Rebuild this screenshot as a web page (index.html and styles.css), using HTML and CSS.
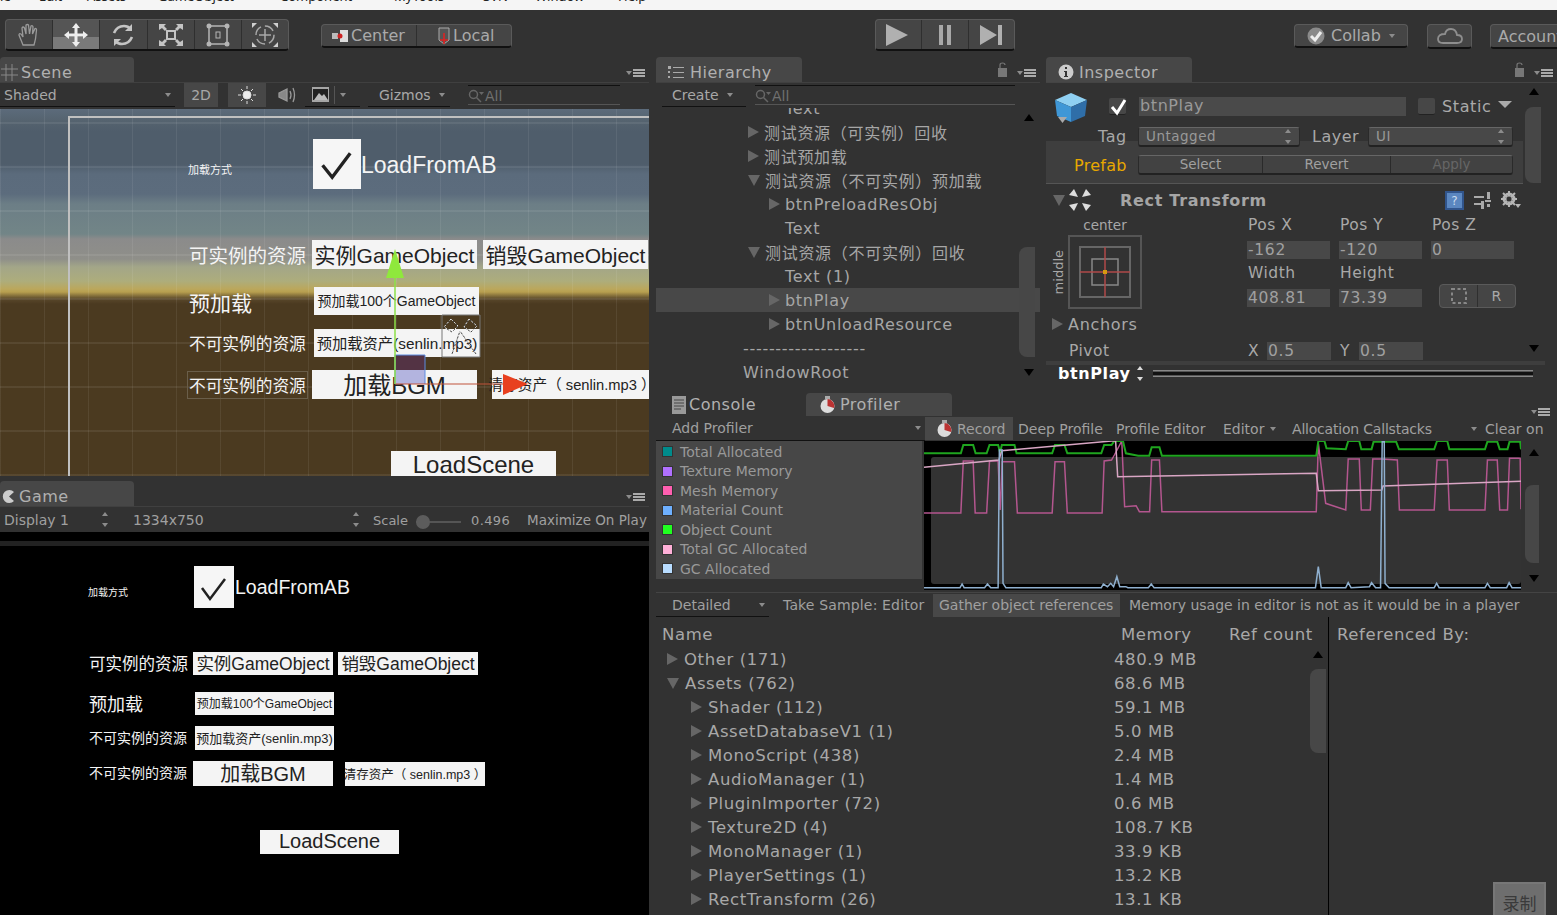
FILE: index.html
```html
<!DOCTYPE html>
<html>

<head>
	<meta charset="utf-8">
	<title>Unity</title>
	<link rel="stylesheet" href="styles.css">
</head>

<body>
	<div class="menubar">
		<div class="menu-row">
			<span class="m-file">File</span><span class="m-edit">Edit</span><span class="m-assets">Assets</span><span class="m-go">GameObject</span><span class="m-comp">Component</span><span class="m-tools">MyTools</span><span class="m-svn">SVN</span><span class="m-win">Window</span><span class="m-help">Help</span>
		</div>
	</div>

	<div class="toolbar">
		<div class="btn-group tools">
			<div class="tbtn"><svg width="26" height="26" viewBox="0 0 26 26" fill="none" stroke="#9a9a9a" stroke-width="1.3"><path d="M7 23 L3 13 Q3 11 5 12 L7 15 L6 6 Q7 4 8.500 6 L10 12 L10 3 Q11.500 2 12.500 3 L13.500 12 L15 4 Q16.500 3 17 5 L16.500 12 L19 6.500 Q20.500 6 20.500 8 L19.500 17 L18 23 Z"/></svg></div>
			<div class="tbtn on"><svg width="26" height="26" viewBox="0 0 26 26" fill="#eee"><path d="M13 1 L17 6 L14.500 6 L14.500 11.500 L20 11.500 L20 9 L25 13 L20 17 L20 14.500 L14.500 14.500 L14.500 20 L17 20 L13 25 L9 20 L11.500 20 L11.500 14.500 L6 14.500 L6 17 L1 13 L6 9 L6 11.500 L11.500 11.500 L11.500 6 L9 6 Z"/></svg></div>
			<div class="tbtn"><svg width="26" height="26" viewBox="0 0 26 26" fill="none" stroke="#c4c4c4" stroke-width="2.600"><path d="M4 11 Q7 4 14 4 Q18 4 21 7"/><path d="M22 15 Q19 22 12 22 Q8 22 5 19"/><path d="M22 2 L22 9 L15 9" fill="#c4c4c4" stroke="none"/><path d="M4 24 L4 17 L11 17" fill="#c4c4c4" stroke="none"/></svg></div>
			<div class="tbtn"><svg width="28" height="26" viewBox="0 0 28 26" fill="#c4c4c4"><rect x="10" y="9" width="8" height="8" fill="none" stroke="#c4c4c4" stroke-width="2"/><path d="M2 2 L9 2 L7 4 L10 7 L8 9 L5 6 L2 8 Z"/><path d="M26 2 L19 2 L21 4 L18 7 L20 9 L23 6 L26 8 Z"/><path d="M2 24 L9 24 L7 22 L10 19 L8 17 L5 20 L2 18 Z"/><path d="M26 24 L19 24 L21 22 L18 19 L20 17 L23 20 L26 18 Z"/></svg></div>
			<div class="tbtn"><svg width="26" height="26" viewBox="0 0 26 26" fill="#b5b5b5"><rect x="4" y="4" width="18" height="18" fill="none" stroke="#b5b5b5" stroke-width="1.500"/><circle cx="4" cy="4" r="2.500"/><circle cx="22" cy="4" r="2.500"/><circle cx="4" cy="22" r="2.500"/><circle cx="22" cy="22" r="2.500"/><rect x="11" y="10" width="4" height="6" fill="none" stroke="#b5b5b5"/></svg></div>
			<div class="tbtn"><svg width="28" height="26" viewBox="0 0 28 26" fill="none" stroke="#a8a8a8" stroke-width="1.500"><circle cx="14" cy="13" r="9" stroke-dasharray="10 4"/><path d="M14 7 V19 M8 13 H20"/><path d="M1 6 V1 H6 Z M27 6 V1 H22 Z M1 20 V25 H6 Z M27 20 V25 H22 Z" fill="#cfcfcf" stroke="none"/></svg></div>
		</div>

		<div class="btn-group pivots">
			<div class="pbtn center"><svg width="18" height="14" viewBox="0 0 18 14"><rect x="0" y="4" width="6" height="6" fill="#bbb"/><rect x="8" y="1" width="8" height="12" fill="#ddd"/><circle cx="8" cy="7" r="2.500" fill="#c22"/></svg>Center</div>
			<div class="pbtn local"><svg width="16" height="20" viewBox="0 0 16 20"><path d="M3 2 H13 V14 L8 18 L3 14 Z" fill="#555" stroke="#aaa"/><path d="M8 7 V18 M4 14 H12" stroke="#d22" stroke-width="1.600"/></svg>Local</div>
		</div>

		<div class="btn-group player">
			<div class="plbtn wide"><svg width="24" height="22" viewBox="0 0 24 22"><path d="M1 0 L23 11 L1 22 Z" fill="#b0b0b0"/></svg></div>
			<div class="plbtn"><svg width="18" height="22" viewBox="0 0 18 22"><path d="M3 1 H7 V21 H3 Z M11 1 H15 V21 H11 Z" fill="#a8a8a8"/></svg></div>
			<div class="plbtn"><svg width="24" height="22" viewBox="0 0 24 22"><path d="M1 1 L18 11 L1 21 Z M19 1 H23 V21 H19 Z" fill="#b0b0b0"/></svg></div>
		</div>

		<div class="btn-group collab"><svg width="18" height="18" viewBox="0 0 18 18"><circle cx="9" cy="9" r="8.500" fill="#8a8a8a"/><path d="M4 9 L8 13 L14 5" fill="none" stroke="#eee" stroke-width="3"/></svg>Collab<i class="drop"></i></div>
		<div class="btn-group cloud"><svg width="28" height="18" viewBox="0 0 28 18" fill="none" stroke="#8e8e8e" stroke-width="1.800"><path d="M7 16 H21 Q26 16 26 12 Q26 8 21 8 Q20 2 15 2 Q10 2 9 7 Q2 7 2 12 Q2 16 7 16 Z"/></svg></div>
		<div class="btn-group account">Account</div>
	</div>

	<div class="workspace">
		<div class="col-left">
			<section class="panel scene-panel">
				<div class="tabs">
					<div class="tab short"><svg width="17" height="17" viewBox="0 0 17 17" stroke="#888" fill="none"><path d="M5 0 V17 M11 0 V17 M0 5 H17 M0 11 H17"/></svg>Scene</div>
					<div class="panel-menu"><i class="drop"></i><b></b></div>
				</div>
				<div class="bar scene-bar">
					<div class="b-shaded">Shaded<i class="drop"></i></div>
					<div class="b-2d">2D</div>
					<div class="b-light"><svg width="20" height="20" viewBox="0 0 20 20" stroke="#ddd"><circle cx="10" cy="10" r="4" fill="#eee"/><path d="M10 1 V4 M10 16 V19 M1 10 H4 M16 10 H19 M4 4 L6 6 M14 14 L16 16 M4 16 L6 14 M14 6 L16 4"/></svg></div>
					<div class="b-audio"><svg width="20" height="18" viewBox="0 0 20 18" fill="none" stroke="#999" stroke-width="1.300"><path d="M1 7 L9 3 V15 L1 11 Z" fill="#888"/><path d="M12 5 Q14 9 12 13 M15 2 Q18 9 15 16"/></svg></div>
					<div class="b-img"><svg width="17" height="15" viewBox="0 0 17 15"><rect width="17" height="15" fill="#a5a5a5"/><rect x="1" y="2" width="15" height="11" fill="#222"/><path d="M2 13 L7 6 L10 9 L12 7 L16 13 Z" fill="#bbb"/></svg><u></u><i class="drop"></i></div>
					<div class="b-giz">Gizmos<i class="drop"></i></div>
					<div class="b-search"><svg width="16" height="14" viewBox="0 0 16 14" fill="none" stroke="#666" stroke-width="1.500"><circle cx="5.500" cy="5.500" r="4"/><path d="M8.500 8.500 L13 13"/><path d="M11 3 H16 L13.500 6 Z" fill="#666" stroke="none"/></svg>All</div>
				</div>
				<div class="scene-view">
					<div class="frame"></div>
					<div class="lbl s-way">加载方式</div>
					<div class="box s-box"><svg viewBox="0 0 40 40"><path d="M8 21 L16 31 L31 11" fill="none" stroke="#222" stroke-width="2.800"/></svg></div>
					<div class="lbl s-ab">LoadFromAB</div>
					<div class="lbl s-res1">可实例的资源</div>
					<div class="ubtn s-inst">实例GameObject</div>
					<div class="ubtn s-kill">销毁GameObject</div>
					<div class="lbl s-pre">预加载</div>
					<div class="ubtn s-pre100">预加载100个GameObject</div>
					<div class="lbl s-res2">不可实例的资源</div>
					<div class="ubtn s-prea">预加载资产(senlin.mp3)</div>
					<div class="lbl s-res3">不可实例的资源</div>
					<div class="ubtn s-bgm">加载BGM</div>
					<div class="ubtn s-clear">清存资产（ senlin.mp3 ）</div>
					<div class="ubtn s-load">LoadScene</div>
					<svg class="gizmo" width="649" height="367" viewBox="0 110 649 367">
						<path d="M442 316 H480 V358 H442 Z" fill="none" stroke="#777"/>
						<path d="M451 320 L444 328 L452 333 L458 327 Z M469 320 L464 328 L471 333 L477 327 Z M460 332 L452 355 M460 332 L476 355" fill="none" stroke="#444"/>
						<path d="M451 320 L444 328 L452 333 L458 327 Z M469 320 L464 328 L471 333 L477 327 Z M460 332 L452 355 M460 332 L476 355" fill="none" stroke="#eee" stroke-dasharray="2 2"/>
						<rect x="395" y="356" width="30" height="15" fill="#533344"/>
						<rect x="395" y="371" width="30" height="14" fill="#b3b4df"/>
						<path d="M395 385 V356 H425 V385" fill="none" stroke="#5c8ce0"/>
						<path d="M395 385 H505" stroke="#c0523a"/>
						<path d="M395 385 V275" stroke="#8ce04a" stroke-width="1.500"/>
						<path d="M395 250 L404 279 L386 279 Z" fill="#8fe83c"/>
						<path d="M528 385 L503 375 L503 396 Z" fill="#e8401f"/>
					</svg>
				</div>
			</section>
			<section class="panel game-panel">
				<div class="tabs">
					<div class="tab short game-tab"><svg width="15" height="15" viewBox="0 0 15 15"><path d="M13 3 A6.500 6.500 0 1 0 13 12 L8 7.500 Z" fill="#ccc"/></svg>Game</div>
					<div class="panel-menu"><i class="drop"></i><b></b></div>
				</div>
				<div class="bar game-bar">
					<div class="g-disp">Display 1<i class="updown"></i></div>
					<div class="g-res">1334x750<i class="updown"></i></div>
					<div class="g-scale">Scale<span class="slider"><em></em></span><span class="g-val">0.496</span></div>
					<div class="g-max">Maximize On Play</div>
				</div>
				<div class="game-view">
					<div class="game-band"></div>
					<div class="lbl g1-way">加载方式</div>
					<div class="box g1-box"><svg viewBox="0 0 40 40"><path d="M8 21 L16 32 L31 12" fill="none" stroke="#222" stroke-width="2.500"/></svg></div>
					<div class="lbl g1-ab">LoadFromAB</div>
					<div class="lbl g1-res1">可实例的资源</div>
					<div class="ubtn g1-inst">实例GameObject</div>
					<div class="ubtn g1-kill">销毁GameObject</div>
					<div class="lbl g1-pre">预加载</div>
					<div class="ubtn g1-pre100">预加载100个GameObject</div>
					<div class="lbl g1-res2">不可实例的资源</div>
					<div class="ubtn g1-prea">预加载资产(senlin.mp3)</div>
					<div class="lbl g1-res3">不可实例的资源</div>
					<div class="ubtn g1-bgm">加载BGM</div>
					<div class="ubtn g1-clear">清存资产（ senlin.mp3 ）</div>
					<div class="ubtn g1-load">LoadScene</div>
				</div>
			</section>
		</div>

		<div class="col-right">
			<div class="row-top">
				<section class="panel hier-panel">
					<div class="tabs">
						<div class="tab"><svg width="17" height="13" viewBox="0 0 17 13" fill="#aaa"><path d="M0 0 H3 V3 H0 Z M0 5 H2 V7 H0 Z M0 10 H2 V12 H0 Z M5 1 H16 V2 H5 Z M5 6 H16 V7 H5 Z M5 11 H16 V12 H5 Z"/></svg>Hierarchy</div>
						<div class="panel-menu"><svg class="lock" width="11" height="15" viewBox="0 0 11 15"><path d="M1 6 H10 V15 H1 Z" fill="#777"/><path d="M3 6 V3 Q3 1 5.500 1 Q8 1 8 3" fill="none" stroke="#777" stroke-width="1.200"/></svg><i class="drop"></i><b></b></div>
					</div>
					<div class="bar hier-bar">
						<div class="h-create">Create<i class="drop"></i></div>
						<div class="b-search h-search"><svg width="16" height="14" viewBox="0 0 16 14" fill="none" stroke="#666" stroke-width="1.500"><circle cx="5.500" cy="5.500" r="4"/><path d="M8.500 8.500 L13 13"/><path d="M11 3 H16 L13.500 6 Z" fill="#666" stroke="none"/></svg>All</div>
					</div>
					<div class="tree">
						<div class="node l1 none">Text</div>
						<div class="node l0"><i class="arr-r"></i>测试资源（可实例）回收</div>
						<div class="node l0"><i class="arr-r"></i>测试预加载</div>
						<div class="node l0"><i class="arr-d"></i>测试资源（不可实例）预加载</div>
						<div class="node l1"><i class="arr-r"></i>btnPreloadResObj</div>
						<div class="node l1 none">Text</div>
						<div class="node l0"><i class="arr-d"></i>测试资源（不可实例）回收</div>
						<div class="node l1 none">Text (1)</div>
						<div class="node l1 sel"><i class="arr-r"></i>btnPlay</div>
						<div class="node l1"><i class="arr-r"></i>btnUnloadResource</div>
						<div class="node root">-------------------</div>
						<div class="node root">WindowRoot</div>
						<i class="sb-up hs-up"></i>
						<i class="sb-thumb hs-thumb"></i>
						<i class="sb-down hs-down"></i>
					</div>
				</section>

				<section class="panel insp-panel">
					<div class="tabs insp-tabs">
						<div class="tab"><svg width="16" height="16" viewBox="0 0 16 16"><circle cx="8" cy="8" r="7.500" fill="#ccc"/><path d="M7 3 H9 V5 H7 Z M6 7 H9 V12 H10 V13 H6 V12 H7 V8 H6 Z" fill="#333"/></svg>Inspector</div>
						<div class="panel-menu"><svg class="lock" width="11" height="15" viewBox="0 0 11 15"><path d="M1 6 H10 V15 H1 Z" fill="#777"/><path d="M3 6 V3 Q3 1 5.500 1 Q8 1 8 3" fill="none" stroke="#777" stroke-width="1.200"/></svg><i class="drop"></i><b></b></div>
					</div>
					<div class="insp-body">
						<div class="i-head">
							<svg class="cube" width="34" height="34" viewBox="0 0 34 34"><path d="M17 1 L33 8 L17 15 L1 8 Z" fill="#8fd0f2"/><path d="M1 8 L17 15 V30 L3 24 Z" fill="#3f97d6"/><path d="M33 8 L17 15 V30 L31 24 Z" fill="#2f6ea8"/><path d="M4 25 H13 L8.500 31 Z" fill="#aaa"/></svg>
							<div class="chk"><svg width="20" height="18" viewBox="0 0 20 18"><path d="M3 9 L8 15 L16 2" fill="none" stroke="#fff" stroke-width="3"/></svg></div>
							<div class="name-field">btnPlay</div>
							<div class="chk plain"></div>
							<div class="static">Static</div>
							<i class="static-drop"></i>
						</div>
						<div class="i-tag">
							<span class="t-tag">Tag</span>
							<div class="dd t-dd1">Untagged<i class="updown"></i></div>
							<span class="t-layer">Layer</span>
							<div class="dd t-dd2">UI<i class="updown"></i></div>
						</div>
						<div class="i-prefab">
							<span class="pf-label">Prefab</span>
							<div class="pf-btns"><div class="pf-sel">Select</div><div class="pf-rev">Revert</div><div class="pf-app">Apply</div></div>
						</div>
						<div class="rt-head">
							<i class="arr-d rt-tri"></i>
							<svg class="rt-icon" width="24" height="24" viewBox="0 0 24 24" fill="#ddd"><path d="M6 1 L10 9 L1 7 Z M18 1 L14 9 L23 7 Z M6 23 L10 15 L1 17 Z M18 23 L14 15 L23 17 Z"/></svg>
							<span class="rt-title">Rect Transform</span>
							<svg class="rt-help" width="19" height="19" viewBox="0 0 19 19"><rect width="19" height="19" fill="#31558c"/><rect x="2" y="2" width="15" height="15" fill="#5b87c0"/><text x="9.500" y="14" font-size="12" fill="#cde" text-anchor="middle" font-family="DejaVu Sans">?</text></svg>
							<svg class="rt-sliders" width="17" height="17" viewBox="0 0 17 17" fill="#aaa"><path d="M0 4 H10 V6 H0 Z M0 11 H7 V13 H0 Z M11 8 H17 V10 H11 Z M13 0 H16 V7 H13 Z M7 9 H10 V17 H7 Z M13 12 H16 V15 H13 Z"/></svg>
							<svg class="rt-gear" width="20" height="18" viewBox="0 0 20 18"><circle cx="8" cy="8" r="5" fill="none" stroke="#b5b5b5" stroke-width="3"/><path d="M8 0 V16 M0 8 H16 M2 2 L14 14 M14 2 L2 14" stroke="#b5b5b5" stroke-width="2"/><circle cx="8" cy="8" r="2.500" fill="#333"/><path d="M14 13 H20 L17 17 Z" fill="#b5b5b5"/></svg>
						</div>
						<div class="rt-body">
							<div class="rt-anchor">
								<div class="rt-center">center</div>
								<div class="rt-anchor-row">
									<span class="rt-middle">middle</span>
									<div class="anchor-box"><svg width="66" height="66" viewBox="0 0 66 66"><rect x="8" y="8" width="50" height="50" fill="none" stroke="#666" stroke-width="2"/><rect x="20" y="20" width="26" height="26" fill="none" stroke="#888" stroke-width="1.500"/><path d="M33 8 V58 M8 33 H58" stroke="#b04a4a" stroke-width="1.500"/><rect x="31" y="31" width="4" height="4" fill="#d69a10"/></svg></div>
								</div>
							</div>
							<div class="rt-grid">
								<span>Pos X</span><span>Pos Y</span><span>Pos Z</span>
								<div class="nf">-162</div><div class="nf">-120</div><div class="nf">0</div>
								<span>Width</span><span>Height</span><span></span>
								<div class="nf">408.81</div><div class="nf">73.39</div>
								<div class="rt-mini"><div><svg width="16" height="16" viewBox="0 0 16 16"><rect x="1" y="1" width="14" height="14" fill="none" stroke="#888" stroke-width="2" stroke-dasharray="3 2.500"/></svg></div><div>R</div></div>
							</div>
						</div>
						<div class="rt-anchors"><i class="arr-r"></i>Anchors</div>
						<div class="rt-pivot">
							<span class="pv-label">Pivot</span>
							<span class="pv-x">X</span><div class="nf pv-f">0.5</div>
							<span class="pv-y">Y</span><div class="nf pv-f">0.5</div>
						</div>
						<i class="sb-up is-up"></i>
						<i class="sb-thumb is-thumb"></i>
						<i class="sb-down is-down"></i>
					</div>
					<div class="preview-sep"></div>
					<div class="preview">
						<b>btnPlay</b><i class="updown white"></i><div class="preview-lines"></div>
					</div>
				</section>
			</div>

			<section class="panel prof-panel">
				<div class="tabs prof-tabs">
					<div class="tab console-tab"><svg width="14" height="18" viewBox="0 0 14 18"><rect width="14" height="18" fill="#999"/><path d="M2 4 H12 M2 7 H12 M2 10 H12 M2 13 H9" stroke="#444"/></svg>Console</div>
					<div class="tab prof-tab"><svg width="15" height="18" viewBox="0 0 15 18"><rect x="5" y="0" width="5" height="3" fill="#aaa"/><circle cx="7.500" cy="10" r="7" fill="#ddd"/><path d="M7.500 10 V3 A7 7 0 0 1 14 12 Z" fill="#b33"/></svg>Profiler</div>
					<div class="panel-menu"><i class="drop"></i><b></b></div>
				</div>
				<div class="bar prof-bar">
					<div class="p-add">Add Profiler<i class="drop"></i></div>
					<div class="p-rec"><svg width="15" height="18" viewBox="0 0 15 18"><rect x="5" y="0" width="5" height="3" fill="#aaa"/><circle cx="7.500" cy="10" r="7" fill="#ddd"/><path d="M7.500 10 V3 A7 7 0 0 1 14 12 Z" fill="#b33"/></svg>Record</div>
					<div class="p-deep">Deep Profile</div>
					<div class="p-edit">Profile Editor</div>
					<div class="p-ed">Editor<i class="drop"></i></div>
					<div class="p-alloc">Allocation Callstacks<i class="drop"></i></div>
					<div class="p-clear">Clear on</div>
				</div>
				<div class="prof-mid">
					<div class="legend">
						<div><i class="c1"></i>Total Allocated</div>
						<div><i class="c2"></i>Texture Memory</div>
						<div><i class="c3"></i>Mesh Memory</div>
						<div><i class="c4"></i>Material Count</div>
						<div><i class="c5"></i>Object Count</div>
						<div><i class="c6"></i>Total GC Allocated</div>
						<div><i class="c7"></i>GC Allocated</div>
					</div>
					<div class="chart">
						<div class="chart-inner"></div>
						<svg viewBox="22 153 1458 447" preserveAspectRatio="none" width="597" height="149">
							<polyline class="ln mesh" points="22,369 112,369 118,213 142,213 147,369 175,369 182,213 203,213 208,360 213,215 243,215 250,369 335,369 342,215 365,215 372,369 457,369 462,213 480,210 487,195 505,153 512,350 540,347 548,365 573,365 578,210 597,210 603,365 980,365 985,160 1003,340 1015,345 1052,360 1058,207 1085,207 1090,360 1112,360 1118,207 1140,207 1178,210 1183,360 1268,360 1275,210 1300,210 1305,360 1392,360 1398,210 1422,210 1428,360 1447,360 1452,205 1478,205 1480,358"/>
							<polyline class="ln obj" points="22,190 112,190 118,165 142,165 148,190 175,190 182,165 203,165 208,188 212,165 243,165 248,190 335,190 342,165 365,165 372,190 455,190 462,165 480,165 487,153 508,153 515,190 545,197 572,197 578,172 597,172 603,197 980,197 985,153 1000,153 1005,175 1052,178 1058,153 1085,153 1090,178 1115,178 1120,155 1175,155 1182,178 1268,178 1275,153 1300,153 1305,178 1392,178 1398,155 1422,155 1428,178 1447,178 1452,155 1478,155 1480,178"/>
							<polyline class="ln tgc" points="22,232 205,210 212,182 480,153 490,153 495,260 980,250 985,302 1140,300 1143,288 1480,274"/>
							<polyline class="ln gc" points="22,593 110,593 115,582 120,593 170,593 177,582 185,593 203,593 206,180 213,180 215,580 222,593 455,593 460,582 470,590 478,580 485,590 493,560 500,590 515,590 520,593 570,593 577,582 584,593 978,593 985,530 992,593 1052,593 1058,578 1065,593 1110,590 1115,578 1125,593 1137,593 1141,155 1146,155 1148,580 1158,593 1268,593 1274,580 1280,593 1392,593 1398,580 1405,593 1445,593 1451,578 1458,593 1480,593"/>
						</svg>
						<i class="sb-up cs-up"></i>
						<i class="sb-thumb cs-thumb"></i>
						<i class="sb-down cs-down"></i>
					</div>
				</div>
				<div class="bar detail-bar">
					<div class="d-det">Detailed<i class="drop"></i></div>
					<div class="d-take">Take Sample: Editor</div>
					<div class="d-gather">Gather object references</div>
					<div class="d-msg">Memory usage in editor is not as it would be in a player</div>
				</div>
				<div class="mem">
					<div class="mem-list">
						<div class="mem-head"><span class="mn">Name</span><span class="mm">Memory</span><span class="mr">Ref count</span></div>
						<div class="mrow"><span class="mn"><i class="arr-r"></i>Other (171)</span><span>480.9 MB</span></div>
						<div class="mrow"><span class="mn"><i class="arr-d"></i>Assets (762)</span><span>68.6 MB</span></div>
						<div class="mrow sub"><span class="mn"><i class="arr-r"></i>Shader (112)</span><span>59.1 MB</span></div>
						<div class="mrow sub"><span class="mn"><i class="arr-r"></i>AssetDatabaseV1 (1)</span><span>5.0 MB</span></div>
						<div class="mrow sub"><span class="mn"><i class="arr-r"></i>MonoScript (438)</span><span>2.4 MB</span></div>
						<div class="mrow sub"><span class="mn"><i class="arr-r"></i>AudioManager (1)</span><span>1.4 MB</span></div>
						<div class="mrow sub"><span class="mn"><i class="arr-r"></i>PluginImporter (72)</span><span>0.6 MB</span></div>
						<div class="mrow sub"><span class="mn"><i class="arr-r"></i>Texture2D (4)</span><span>108.7 KB</span></div>
						<div class="mrow sub"><span class="mn"><i class="arr-r"></i>MonoManager (1)</span><span>33.9 KB</span></div>
						<div class="mrow sub"><span class="mn"><i class="arr-r"></i>PlayerSettings (1)</span><span>13.2 KB</span></div>
						<div class="mrow sub"><span class="mn"><i class="arr-r"></i>RectTransform (26)</span><span>13.1 KB</span></div>
						<i class="sb-up ms-up"></i>
						<i class="sb-thumb ms-thumb"></i>
					</div>
					<div class="mem-refs">
						<div class="mem-head"><span class="mref">Referenced By:</span></div>
						<div class="rec-btn">录制</div>
					</div>
				</div>
			</section>
		</div>
	</div>
</body>

</html>
```

FILE: styles.css
```css
* {
	box-sizing: border-box;
}

body {
	margin: 0;
	width: 1557px;
	height: 915px;
	overflow: hidden;
	background: #323232;
	color: #a8a8a8;
	font-family: "DejaVu Sans", sans-serif;
	font-size: 14px;
}

i {
	display: block;
	font-style: normal;
}

/* menu strip, almost cut off at the top */
.menubar {
	height: 10px;
	overflow: hidden;
	background: #f5f5f5;
	color: #222;
	font-family: "Noto Sans", sans-serif;
	font-size: 13px;
}
.menu-row {
	display: flex;
	margin-top: -13px;
	padding-left: 4px;
	line-height: 18px;
	white-space: nowrap;
}
.m-file { width: 35px; margin-left: -14px; padding-left: 0; }
.m-edit { width: 48px; margin-left: 14px; }
.m-assets { width: 71px; }
.m-go { width: 122px; }
.m-comp { width: 114px; }
.m-tools { width: 89px; }
.m-svn { width: 52px; }
.m-win { width: 83px; }

/* toolbar */
.toolbar {
	display: flex;
	align-items: flex-start;
	height: 47px;
	padding: 9px 0 0 5px;
	overflow: hidden;
}
.btn-group {
	display: flex;
	flex: none;
	border: 1px solid #5a5a5a;
	border-bottom: 2px solid #111;
	border-radius: 4px;
	background: #454545;
}
.tools { width: 284px; height: 32px; }
.tbtn {
	display: flex;
	flex: 1;
	align-items: center;
	justify-content: center;
	border-right: 1px solid #2f2f2f;
}
.tbtn:last-child { border-right: 0; }
.tbtn.on {
	background: linear-gradient(#555 60%, #7a7a7a 60%);
}
.pivots {
	width: 191px;
	height: 24px;
	margin: 5px 0 0 32px;
	font-size: 16px;
	color: #aaa;
}
.pbtn {
	display: flex;
	align-items: center;
	gap: 1px;
	height: 100%;
	padding-left: 10px;
}
.pbtn.center { width: 95px; border-right: 1px solid #2f2f2f; }
.pbtn.local { padding-left: 19px; }
.player {
	width: 140px;
	height: 32px;
	margin-left: 363px;
}
.plbtn {
	display: flex;
	flex: 1;
	align-items: center;
	justify-content: center;
	border-right: 1px solid #2f2f2f;
}
.plbtn:last-child { border-right: 0; }
.plbtn.wide svg { margin-right: 4px; }
.collab {
	align-items: center;
	gap: 6px;
	width: 114px;
	height: 24px;
	margin: 5px 0 0 279px;
	padding-left: 12px;
	font-size: 16px;
	color: #aaa;
}
.collab .drop { margin-left: 2px; }
.cloud {
	align-items: center;
	justify-content: center;
	width: 45px;
	height: 25px;
	margin: 5px 0 0 19px;
}
.account {
	align-items: center;
	width: 90px;
	height: 25px;
	margin: 5px 0 0 18px;
	padding-left: 7px;
	font-size: 16px;
	color: #aaa;
}

.drop {
	display: inline-block;
	width: 0;
	height: 0;
	border: 3px solid transparent;
	border-top: 4px solid #8c8c8c;
	border-bottom: 0;
}
.updown {
	display: inline-block;
	position: relative;
	width: 7px;
	height: 11px;
}
.updown::before,
.updown::after {
	content: "";
	position: absolute;
	left: 0;
	border: 3.500px solid transparent;
}
.updown::before { top: -2px; border-bottom: 4px solid #8c8c8c; border-top: 0; }
.updown::after { bottom: -2px; border-top: 4px solid #8c8c8c; border-bottom: 0; }
.updown.white::before { border-bottom-color: #ddd; }
.updown.white::after { border-top-color: #ddd; }

.arr-r,
.arr-d {
	width: 0;
	height: 0;
	border-style: solid;
	border-color: transparent;
}
.arr-r {
	border-width: 6px 0 6px 11px;
	border-left-color: #666;
}
.arr-d {
	border-width: 11px 6px 0 6px;
	border-top-color: #666;
}

.sb-up,
.sb-down {
	position: absolute;
	width: 0;
	height: 0;
	border: 5px solid transparent;
}
.sb-up { border-bottom: 7px solid #000; border-top: 0; }
.sb-down { border-top: 7px solid #000; border-bottom: 0; }
.sb-thumb {
	position: absolute;
	width: 16px;
	background: #474747;
	border-radius: 8px 0 0 8px;
}

/* workspace */
.workspace {
	display: flex;
	height: 858px;
}
.col-left {
	display: flex;
	flex-direction: column;
	width: 649px;
	flex: none;
}
.col-right {
	display: flex;
	flex-direction: column;
	flex: 1;
	min-width: 0;
	padding-left: 7px;
}
.panel {
	position: relative;
	display: flex;
	flex-direction: column;
	min-width: 0;
}

.tabs {
	display: flex;
	align-items: flex-end;
	justify-content: space-between;
	height: 26px;
	padding-top: 1px;
	border-bottom: 1px solid #404040;
	flex: none;
}
.tab {
	display: flex;
	align-items: center;
	gap: 5px;
	width: 146px;
	height: 25px;
	padding: 5px 0 0 12px;
	background: #474747;
	border-radius: 4px 4px 0 0;
	font-size: 16px;
	letter-spacing: .5px;
	color: #b0b0b0;
}
.tab.short {
	width: 134px;
	padding-left: 1px;
	gap: 3px;
}
.panel-menu {
	display: flex;
	align-items: flex-end;
	gap: 1px;
	height: 100%;
	padding: 0 4px 5px 0;
}
.panel-menu .drop { margin-bottom: 2px; }
.panel-menu b {
	display: block;
	width: 12px;
	height: 8px;
	border-top: 2px solid #aaa;
	border-bottom: 2px solid #aaa;
	background: linear-gradient(#aaa, #aaa) center / 100% 2px no-repeat;
}
.panel-menu .lock { margin-right: 8px; }

.bar {
	display: flex;
	align-items: center;
	height: 24px;
	flex: none;
	font-size: 14px;
	white-space: nowrap;
}

/* scene */
.scene-panel { height: 424px; }
.scene-bar > div {
	display: flex;
	align-items: center;
	height: 100%;
}
.b-shaded { position: relative; width: 175px; padding-left: 4px; border-bottom: 1px solid #111; }
.b-shaded .drop { margin-left: auto; margin-right: 4px; }
.b-2d { justify-content: center; width: 34px; margin-left: 9px; background: #474747; }
.b-light { justify-content: center; width: 38px; margin-left: 10px; background: #474747; }
.b-audio { width: 20px; margin-left: 12px; }
.b-img { width: 55px; margin-left: 7px; padding-left: 7px; gap: 5px; border-bottom: 1px solid #111; }
.b-img u { width: 1px; height: 18px; background: #555; }
.b-giz { width: 82px; margin-left: 8px; padding-left: 11px; gap: 8px; border-bottom: 1px solid #111; }
.b-search {
	display: flex;
	align-items: center;
	width: 152px;
	margin-left: 18px;
	padding-top: 1px;
	height: 20px !important;
	color: #6f6f6f;
	border-top: 1px solid #111;
	border-bottom: 1px solid #555;
	font-size: 14px;
}
.b-search svg { flex: none; margin-right: 1px; }

.scene-view {
	position: relative;
	height: 367px;
	margin-top: 2px;
	overflow: hidden;
	background:
		repeating-linear-gradient(90deg, rgba(255,255,255,.07) 0 1px, transparent 1px 44px),
		repeating-linear-gradient(0deg, rgba(255,255,255,.07) 0 2px, transparent 2px 44px),
		linear-gradient(#5c6b7b 0, #55636f 12px, #4f5d6b 22px, #4f5d6b 55px, #5b6b7c 65px, #5c6c7d 85px, #6c7e86 95px, #728587 125px, #8b8b8b 130px, #8f8f89 150px, #a3a688 158px, #adad7c 172px, #bba75c 180px, #b79f4f 183px, #59472a 190px, #4b3a20 195px);
}
.frame {
	position: absolute;
	left: 68px;
	top: 7px;
	width: 700px;
	height: 400px;
	border: 2px solid #c0c0c0;
}
.gizmo {
	position: absolute;
	left: 0;
	top: 0;
}

.lbl {
	position: absolute;
	color: #f4f4f4;
	white-space: nowrap;
	font-family: "Noto Sans CJK SC", sans-serif;
}
.ubtn {
	position: absolute;
	display: flex;
	align-items: center;
	justify-content: center;
	padding-bottom: 2px;
	background: #f4f4f4;
	color: #222;
	white-space: nowrap;
	font-family: "Liberation Sans", "Noto Sans CJK SC", sans-serif;
}
.box {
	position: absolute;
	background: #f6f6f6;
}
.box svg {
	display: block;
	width: 100%;
	height: 100%;
}

/* scene canvas items */
.s-way { left: 188px; top: 52px; font-size: 11px; }
.s-box { left: 313px; top: 30px; width: 48px; height: 50px; }
.s-ab { left: 361px; top: 38px; font-size: 23px; line-height: 36px; font-family: "Liberation Sans", sans-serif; }
.s-res1 { left: 189px; top: 131px; font-size: 19.500px; line-height: 30px; }
.s-inst { left: 312px; top: 131px; width: 165px; height: 29px; font-size: 21px; }
.s-kill { left: 483px; top: 131px; width: 165px; height: 29px; font-size: 21px; }
.s-pre { left: 189px; top: 178px; font-size: 21px; line-height: 30px; }
.s-pre100 { left: 314px; top: 178px; width: 165px; height: 28px; font-size: 14px; }
.s-res2 { left: 189px; top: 220px; font-size: 16.700px; line-height: 28px; }
.s-prea { left: 314px; top: 220px; width: 166px; height: 28px; font-size: 15.300px; }
.s-res3 { left: 187px; top: 262px; width: 121px; padding-left: 1px; border: 1px solid #6a5e4a; font-size: 16.700px; line-height: 26px; }
.s-bgm { left: 312px; top: 261px; width: 165px; height: 29px; font-size: 24px; }
.s-clear { left: 492px; top: 261px; width: 160px; height: 29px; font-size: 14.700px; }
.s-load { left: 391px; top: 342px; width: 165px; height: 30px; font-size: 24px; }

/* game */
.game-panel { flex: 1; min-height: 0; }
.game-tab svg { margin-left: 0; }
.game-bar {
	position: relative;
	height: 25px;
	color: #a0a0a0;
}
.game-bar > div {
	display: flex;
	align-items: center;
	height: 100%;
}
.g-disp { width: 125px; padding-left: 4px; }
.g-disp .updown { margin-left: auto; margin-right: 16px; }
.g-res { width: 235px; padding-left: 8px; }
.g-res .updown { margin-left: auto; }
.g-scale { width: 167px; padding-left: 13px; font-size: 13px; margin-top: 2px; }
.slider {
	position: relative;
	width: 45px;
	height: 2px;
	margin: 3px 0 0 8px;
	background: #555;
}
.slider em {
	position: absolute;
	left: 0;
	top: -6px;
	width: 14px;
	height: 14px;
	border-radius: 50%;
	background: #5c5c5c;
}
.g-val { margin-left: 10px; letter-spacing: .4px; }
.g-max { font-size: 13.500px; white-space: nowrap; padding-left: 0; }

.game-view {
	position: relative;
	height: 383px;
	overflow: hidden;
	background: #000;
}
.game-band {
	height: 5px;
	margin-top: 9px;
	background: #222;
}
.g1-way { left: 88px; top: 52px; font-size: 10px; }
.g1-box { left: 194px; top: 34px; width: 40px; height: 42px; }
.g1-ab { left: 235px; top: 40px; font-size: 19.500px; line-height: 30px; font-family: "Liberation Sans", sans-serif; }
.g1-res1 { left: 89px; top: 119px; font-size: 16.500px; line-height: 24px; }
.g1-inst { left: 193px; top: 120px; width: 140px; height: 23px; font-size: 17.500px; }
.g1-kill { left: 338px; top: 120px; width: 140px; height: 23px; font-size: 17.500px; }
.g1-pre { left: 89px; top: 158px; font-size: 18px; line-height: 26px; }
.g1-pre100 { left: 195px; top: 160px; width: 139px; height: 23px; font-size: 12px; }
.g1-res2 { left: 89px; top: 194px; font-size: 14px; line-height: 22px; }
.g1-prea { left: 195px; top: 194px; width: 139px; height: 24px; font-size: 13px; }
.g1-res3 { left: 89px; top: 229px; font-size: 14px; line-height: 22px; }
.g1-bgm { left: 193px; top: 229px; width: 140px; height: 25px; font-size: 20px; }
.g1-clear { left: 345px; top: 230px; width: 140px; height: 24px; font-size: 12.500px; }
.g1-load { left: 260px; top: 298px; width: 139px; height: 24px; font-size: 20px; }

/* top right */
.row-top {
	display: flex;
	gap: 6px;
	height: 333px;
	flex: none;
}
.hier-panel { width: 384px; flex: none; }
.insp-panel { flex: 1; }
.tab svg { flex: none; }

.hier-bar { padding-left: 6px; }
.h-create {
	display: flex;
	align-items: center;
	gap: 8px;
	width: 84px;
	height: 100%;
	padding-left: 10px;
	border-bottom: 1px solid #111;
}
.h-search {
	width: 260px;
	margin-left: 9px;
}

.tree {
	position: relative;
	flex: 1;
	margin-top: 1px;
	overflow: hidden;
}
.node {
	display: flex;
	align-items: center;
	height: 24px;
	font-size: 16px;
	letter-spacing: .7px;
	white-space: nowrap;
	color: #a6a6a6;
	font-family: "DejaVu Sans", "Noto Sans CJK SC", sans-serif;
}
.node:first-child { margin-top: -12px; }
.node i { flex: none; margin-right: 5px; }
.node.l0 { padding-left: 92px; }
.node.l1 { padding-left: 113px; }
.node.none { padding-left: 129px; }
.node.root { padding-left: 87px; }
.node.sel { background: #484848; }
.hs-up { left: 368px; top: 6px; }
.hs-thumb { left: 363px; top: 139px; height: 110px; }
.hs-down { left: 368px; top: 261px; }

.insp-tabs { border-bottom: 1px solid #444; }
.insp-body {
	position: relative;
	height: 278px;
}
.i-head {
	display: flex;
	align-items: center;
	height: 43px;
	padding: 3px 0 0 8px;
	color: #aaa;
}
.cube { flex: none; margin-top: 5px; }
.chk {
	width: 17px;
	height: 17px;
	margin-left: 21px;
	background: #474747;
	border-radius: 2px;
	border-bottom: 1px solid #222;
	flex: none;
}
.chk svg { display: block; }
.chk.plain { margin-left: 12px; }
.name-field {
	width: 267px;
	height: 19px;
	margin-left: 13px;
	padding-left: 1px;
	background: #4a4a4a;
	font-size: 16px;
	line-height: 17px;
	letter-spacing: .6px;
	color: #999;
}
.static { margin-left: 7px; font-size: 16px; letter-spacing: .6px; }
.static-drop {
	margin: 0 0 4px 7px;
	width: 0;
	height: 0;
	border: 7px solid transparent;
	border-top: 7px solid #aaa;
	border-bottom: 0;
}
.i-tag {
	position: relative;
	display: flex;
	align-items: center;
	height: 21px;
	z-index: 1;
	font-size: 16px;
	letter-spacing: .5px;
}
.t-tag { margin-left: 52px; width: 40px; }
.t-layer { margin-left: 12px; width: 56px; }
.dd {
	display: flex;
	align-items: center;
	justify-content: space-between;
	height: 20px;
	padding: 0 7px;
	background: #484848;
	border: 1px solid #2a2a2a;
	border-top: 1px solid #666;
	border-bottom: 2px solid #222;
	border-radius: 3px;
	font-size: 13.500px;
	color: #999;
}
.t-dd1 { width: 162px; }
.t-dd2 { width: 145px; }
.i-prefab {
	display: flex;
	align-items: center;
	width: 477px;
	height: 43px;
	margin-top: -6px;
	padding: 8px 0 2px;
	background: #3e3e3e;
	border-bottom: 1px solid #555;
}
.pf-label {
	width: 92px;
	padding-left: 28px;
	color: #e8a800;
	font-size: 16px;
	letter-spacing: .3px;
}
.pf-btns {
	display: flex;
	width: 375px;
	height: 20px;
	border: 1px solid #2a2a2a;
	border-top: 1px solid #666;
	border-bottom: 2px solid #222;
	border-radius: 3px;
	background: #424242;
	font-size: 13.500px;
}
.pf-btns div { text-align: center; line-height: 16px; border-right: 1px solid #2a2a2a; }
.pf-sel { width: 124px; color: #a0a0a0; }
.pf-rev { width: 128px; color: #a0a0a0; }
.pf-app { flex: 1; color: #666; border-right: 0 !important; }

.rt-head {
	display: flex;
	align-items: center;
	height: 32px;
	padding-left: 7px;
}
.rt-tri { flex: none; }
.rt-icon { margin-left: 3px; flex: none; }
.rt-title {
	margin-left: 28px;
	width: 325px;
	font-size: 16px;
	font-weight: bold;
	letter-spacing: .7px;
	color: #a5a5a5;
}
.rt-sliders { margin-left: 10px; }
.rt-gear { margin-left: 10px; }

.rt-body {
	display: flex;
	height: 95px;
	margin-top: -2px;
}
.rt-anchor {
	width: 201px;
	flex: none;
}
.rt-center {
	width: 118px;
	text-align: center;
	height: 21px;
	font-size: 13.500px;
	line-height: 18px;
	padding-top: 2px;
}
.rt-anchor-row {
	display: flex;
	align-items: center;
	padding-left: 5px;
}
.rt-middle {
	display: block;
	width: 17px;
	writing-mode: vertical-rl;
	transform: rotate(180deg);
	font-size: 13px;
	text-align: center;
}
.anchor-box {
	width: 74px;
	height: 74px;
	border: 2px solid #555;
	padding: 2px;
	flex: none;
}
.anchor-box svg { display: block; }
.rt-grid {
	display: grid;
	grid-template-columns: 83px 83px 83px;
	grid-template-rows: 22px 23px 28px 20px;
	column-gap: 9px;
	font-size: 15.500px;
	letter-spacing: .5px;
}
.rt-grid > span { display: flex; align-items: center; padding-left: 1px; }
.rt-grid .nf { align-self: end; }
.nf {
	height: 18px;
	padding-left: 1px;
	background: #484848;
	font-size: 15.500px;
	line-height: 18px;
	letter-spacing: .7px;
	color: #a0a0a0;
}
.rt-mini {
	display: flex;
	width: 77px;
	height: 24px;
	margin: -3px 0 0 8px;
	background: #454545;
	border: 1px solid #5a5a5a;
	border-radius: 4px;
}
.rt-mini div {
	display: flex;
	align-items: center;
	justify-content: center;
	flex: 1;
	height: 100%;
	border-right: 1px solid #2f2f2f;
	font-size: 14px;
}
.rt-mini div:last-child { border-right: 0; }

.rt-anchors {
	display: flex;
	align-items: center;
	gap: 5px;
	height: 24px;
	margin-top: 3px;
	padding-left: 6px;
	font-size: 16px;
	letter-spacing: .7px;
}
.rt-pivot {
	display: flex;
	align-items: center;
	height: 22px;
	margin-top: 4px;
	font-size: 15.500px;
	letter-spacing: .5px;
}
.pv-label { width: 202px; padding-left: 23px; }
.pv-x { width: 19px; }
.pv-y { width: 19px; margin-left: 9px; }
.pv-f { width: 64px; }
.is-up { left: 483px; top: 5px; }
.is-thumb { left: 479px; top: 24px; height: 76px; }
.is-down { left: 483px; top: 262px; }

.preview-sep {
	width: 499px;
	height: 4px;
	background: #3e3e3e;
}
.preview {
	display: flex;
	align-items: center;
	gap: 7px;
	height: 16px;
	padding-left: 12px;
	color: #fff;
	font-size: 16px;
	letter-spacing: .6px;
}
.preview b { width: 72px; }
.preview-lines {
	width: 380px;
	height: 7px;
	margin-left: 2px;
	border-top: 1px solid #888;
	border-bottom: 1px solid #888;
	background: linear-gradient(#111, #111) center / 100% 3px no-repeat, #555;
}

/* profiler */
.prof-panel {
	flex: 1;
	min-height: 0;
	margin-top: 2px;
}
.prof-tabs {
	height: 24px;
	border: 0;
	justify-content: flex-start;
}
.console-tab {
	width: 150px;
	height: 23px;
	background: transparent;
	padding: 0 0 0 16px;
	gap: 3px;
}
.prof-tab {
	height: 23px;
	gap: 5px;
	padding: 0 0 0 14px;
}
.prof-tabs .panel-menu { margin-left: auto; padding-bottom: 0; padding-right: 7px; height: auto; }
.prof-bar { height: 25px; }
.prof-bar > div {
	display: flex;
	align-items: center;
	height: 100%;
	color: #a0a0a0;
}
.p-add { width: 269px; padding-left: 16px; border-bottom: 1px solid #111; }
.p-add .drop { margin-left: auto; margin-right: 4px; }
.p-rec { width: 88px; gap: 5px; padding-left: 12px; background: #484848; height: 23px !important; }
.p-deep { width: 103px; padding-left: 5px; }
.p-edit { width: 107px; }
.p-ed { width: 69px; gap: 6px; }
.p-alloc { width: 193px; letter-spacing: -.2px; }
.p-alloc .drop { margin-left: auto; margin-right: 8px; }

.prof-mid {
	display: flex;
	height: 152px;
	border-bottom: 1px solid #444;
}
.legend {
	width: 266px;
	height: 138px;
	padding: 1px 0 0 7px;
	background: #474747;
	flex: none;
}
.legend div {
	display: flex;
	align-items: center;
	gap: 8px;
	height: 19.500px;
	font-size: 14px;
	color: #999;
}
.legend i {
	width: 9px;
	height: 9px;
	box-shadow: 0 0 0 1px #333;
}
.c1 { background: #008b8b; }
.c2 { background: #b070ff; }
.c3 { background: #ff5fb0; }
.c4 { background: #6eb0ff; }
.c5 { background: #20ff20; }
.c6 { background: #ffb0d8; }
.c7 { background: #b8dcff; }

.chart {
	position: relative;
	flex: none;
	width: 597px;
	height: 149px;
	margin-left: 2px;
	background: #000;
}
.chart svg {
	position: absolute;
	left: 0;
	top: 0;
}
.chart-inner {
	position: absolute;
	left: 7px;
	top: 16px;
	width: 590px;
	height: 127px;
	background: #333;
	border-radius: 3px;
}
.ln {
	fill: none;
	stroke-width: 1.500;
	vector-effect: non-scaling-stroke;
}
.mesh { stroke: #b4568f; }
.obj { stroke: #1fa51f; stroke-width: 2; }
.tgc { stroke: #d9a6c4; }
.gc { stroke: #8fb0cf; }
.cs-up { left: 605px; top: 8px; }
.cs-thumb { left: 601px; top: 44px; height: 78px; width: 14px; }
.cs-down { left: 605px; top: 134px; }

.detail-bar {
	height: 24px;
}
.detail-bar > div {
	display: flex;
	align-items: center;
	height: 100%;
	color: #a0a0a0;
}
.d-det { width: 113px; padding-left: 16px; border-bottom: 1px solid #111; }
.d-det .drop { margin-left: auto; margin-right: 4px; }
.d-take { width: 164px; padding-left: 14px; letter-spacing: .15px; }
.d-gather { width: 187px; padding-left: 6px; background: #484848; height: 23px !important; }
.d-msg { padding-left: 9px; }

.mem {
	display: flex;
	flex: 1;
	min-height: 0;
	overflow: hidden;
}
.mem-list {
	position: relative;
	width: 673px;
	flex: none;
	border-right: 1px solid #000;
	font-size: 16.500px;
	letter-spacing: .6px;
}
.mem-head {
	display: flex;
	align-items: center;
	height: 30px;
	padding-top: 5px;
}
.mm { width: 115px; padding-left: 7px; }
.mrow {
	display: flex;
	align-items: center;
	height: 24px;
}
.mn {
	display: flex;
	align-items: center;
	gap: 6px;
	width: 458px;
	padding-left: 11px;
	flex: none;
}
.mem-head .mn { padding-left: 6px; }
.mrow.sub .mn { padding-left: 35px; }
.mrow i { flex: none; }
.ms-up { left: 657px; top: 34px; }
.ms-thumb { left: 654px; top: 52px; height: 84px; }

.mem-refs {
	position: relative;
	flex: 1;
	font-size: 16.500px;
	letter-spacing: .6px;
}
.mref { padding-left: 8px; }
.rec-btn {
	position: absolute;
	left: 164px;
	top: 265px;
	width: 53px;
	height: 40px;
	border: 2px solid #777;
	border-bottom: 0;
	background: #6e6e6e;
	color: #3a3a3a;
	text-align: center;
	line-height: 38px;
	font-size: 17px;
	letter-spacing: 0;
	font-family: "Noto Sans CJK SC", sans-serif;
}
```
